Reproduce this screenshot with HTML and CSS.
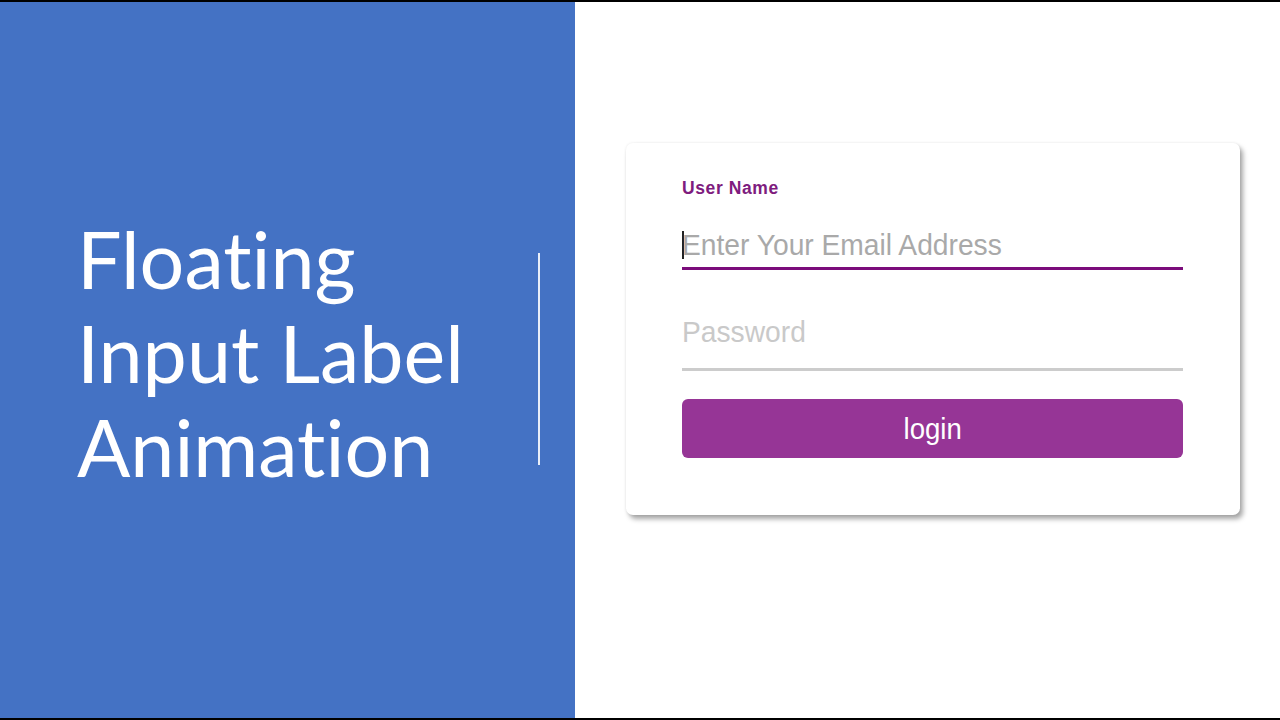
FILE: index.html
```html
<!DOCTYPE html>
<html>
<head>
<meta charset="utf-8">
<link rel="stylesheet" href="styles.css">
</head>
<body>
<div class="frame">
  <section class="left">
    <h1 class="title">Floating<br>Input Label<br>Animation</h1>
    <div class="divider"></div>
  </section>
  <section class="right">
    <form class="card">
      <div class="field active">
        <label class="label">User Name</label>
        <div class="input"><span class="caret"></span><span class="ph">Enter Your Email Address</span></div>
      </div>
      <div class="field">
        <div class="input pw"><span class="ph">Password</span></div>
      </div>
      <button type="button" class="btn"><span class="btn-text">login</span></button>
    </form>
  </section>
</div>
</body>
</html>
```
FILE: styles.css
```css
html, body { margin: 0; padding: 0; }
body { width: 1280px; height: 720px; background: #000; overflow: hidden; }
.frame {
  margin-top: 2px;
  height: 716px;
  display: flex;
}
.left {
  width: 575px;
  background: #4472c4;
  display: flex;
  align-items: center;
  position: relative;
}
.title {
  margin: 0 0 0 77px;
  padding-bottom: 14px;
  font-family: Lato, "Open Sans", sans-serif;
  font-weight: 400;
  font-size: 79px;
  line-height: 94px;
  color: #fff;
  letter-spacing: 0;
  font-variant-ligatures: none;
  font-feature-settings: "liga" 0, "clig" 0;
}
.divider {
  position: absolute;
  left: 538px;
  top: 251px;
  width: 2px;
  height: 212px;
  background: #e9eef8;
}
.right {
  flex: 1;
  background: #fff;
  padding: 141px 0 0 51px;
}
.card {
  width: 614px;
  height: 372px;
  box-sizing: border-box;
  background: #fff;
  border-radius: 7px;
  box-shadow: 3px 4px 5px rgba(0,0,0,0.35), 0 0 3px rgba(0,0,0,0.08);
  padding: 35px 56px 0 56px;
  display: flex;
  flex-direction: column;
  font-family: "Liberation Sans", Arial, sans-serif;
}
.label {
  display: block;
  color: #7e1c7e;
  font-size: 17.5px;
  font-weight: 700;
  height: 20px;
  line-height: 20px;
  letter-spacing: 0.6px;
}
.input {
  width: 501px;
  box-sizing: border-box;
  border-bottom: 3px solid #cccccc;
  display: flex;
  align-items: center;
  font-size: 30px;
  position: relative;
}
.field.active .input {
  border-bottom-color: #7b0c7b;
  height: 72px;
  padding-top: 24px;
}
.ph {
  color: #a9a9a9;
  transform: scaleX(0.94);
  transform-origin: left;
  white-space: nowrap;
}
.pw { height: 101px; padding-top: 25px; }
.pw .ph { color: #c9c9c9; }
.caret {
  position: absolute;
  left: 0;
  top: 33px;
  width: 2px;
  height: 28px;
  background: #222;
}
.btn {
  margin-top: 28px;
  width: 501px;
  height: 59px;
  border: none;
  border-radius: 6px;
  background: #963596;
  color: #fff;
  font-family: "Liberation Sans", Arial, sans-serif;
  font-size: 30px;
  padding: 0;
  display: flex;
  justify-content: center;
  align-items: center;
}
.btn-text { display: inline-block; transform: scaleX(0.92); }
```
